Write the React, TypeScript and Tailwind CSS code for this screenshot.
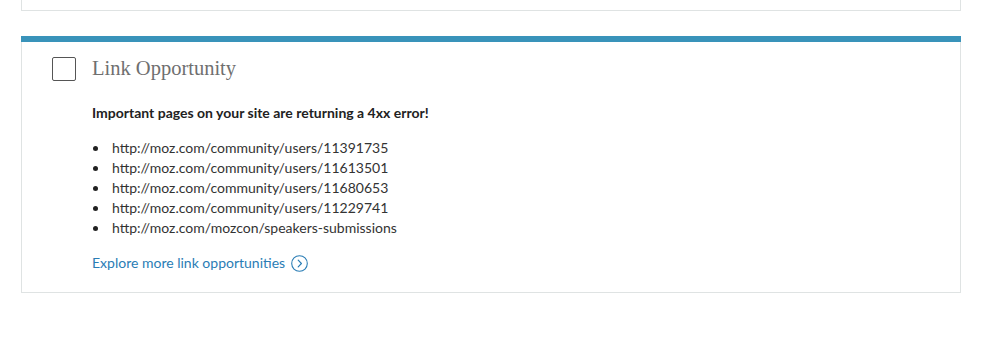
const urls = [
  'http://moz.com/community/users/11391735',
  'http://moz.com/community/users/11613501',
  'http://moz.com/community/users/11680653',
  'http://moz.com/community/users/11229741',
  'http://moz.com/mozcon/speakers-submissions',
];

function CircleChevron() {
  return (
    <svg width="17" height="17" viewBox="0 0 17 17" fill="none" className="ml-[6px]">
      <circle cx="8.5" cy="8.5" r="7.8" stroke="#2a7db5" strokeWidth="1.1" />
      <path d="M7.2 5.2 L10.4 8.5 L7.2 11.8" stroke="#2a7db5" strokeWidth="1.2" strokeLinecap="round" strokeLinejoin="round" />
    </svg>
  );
}

export default function App() {
  return (
    <div className="min-h-[337px] bg-white font-['Lato',sans-serif]">
      {/* previous card, cut off at the top */}
      <div className="ml-[21px] mr-[23px] h-[11px] border border-t-0 border-[#dfe3e3]" />

      <div className="ml-[21px] mr-[23px] mt-[25px]">
        <div className="h-[6px] bg-[#3993ba]" />
        <div className="border border-t-0 border-[#dfe3e3] pl-[30px] pt-[15px] pb-[19px]">
          <div className="flex items-center">
            <div className="h-[24px] w-[24px] rounded-[2px] border border-[#555]" />
            <h2 className="ml-[16px] -mt-[2px] font-['Liberation_Serif',serif] text-[20.5px] leading-[24px] text-[#6f6f6f]">
              Link Opportunity
            </h2>
          </div>

          <div className="pl-[40px]">
            <p className="mt-[22px] text-[14px] font-bold leading-[20px] text-[#222]">
              Important pages on your site are returning a 4xx error!
            </p>
            <ul className="mt-[15px]">
              {urls.map((u) => (
                <li key={u} className="flex items-center text-[14px] leading-[20px] text-[#333]">
                  <span className="ml-[1px] mr-[14px] h-[5px] w-[5px] rounded-full bg-[#222]" />
                  {u}
                </li>
              ))}
            </ul>
            <a href="#" className="mt-[15px] flex items-center text-[14px] leading-[20px] text-[#2a7db5]">
              Explore more link opportunities
              <CircleChevron />
            </a>
          </div>
        </div>
      </div>
    </div>
  );
}
